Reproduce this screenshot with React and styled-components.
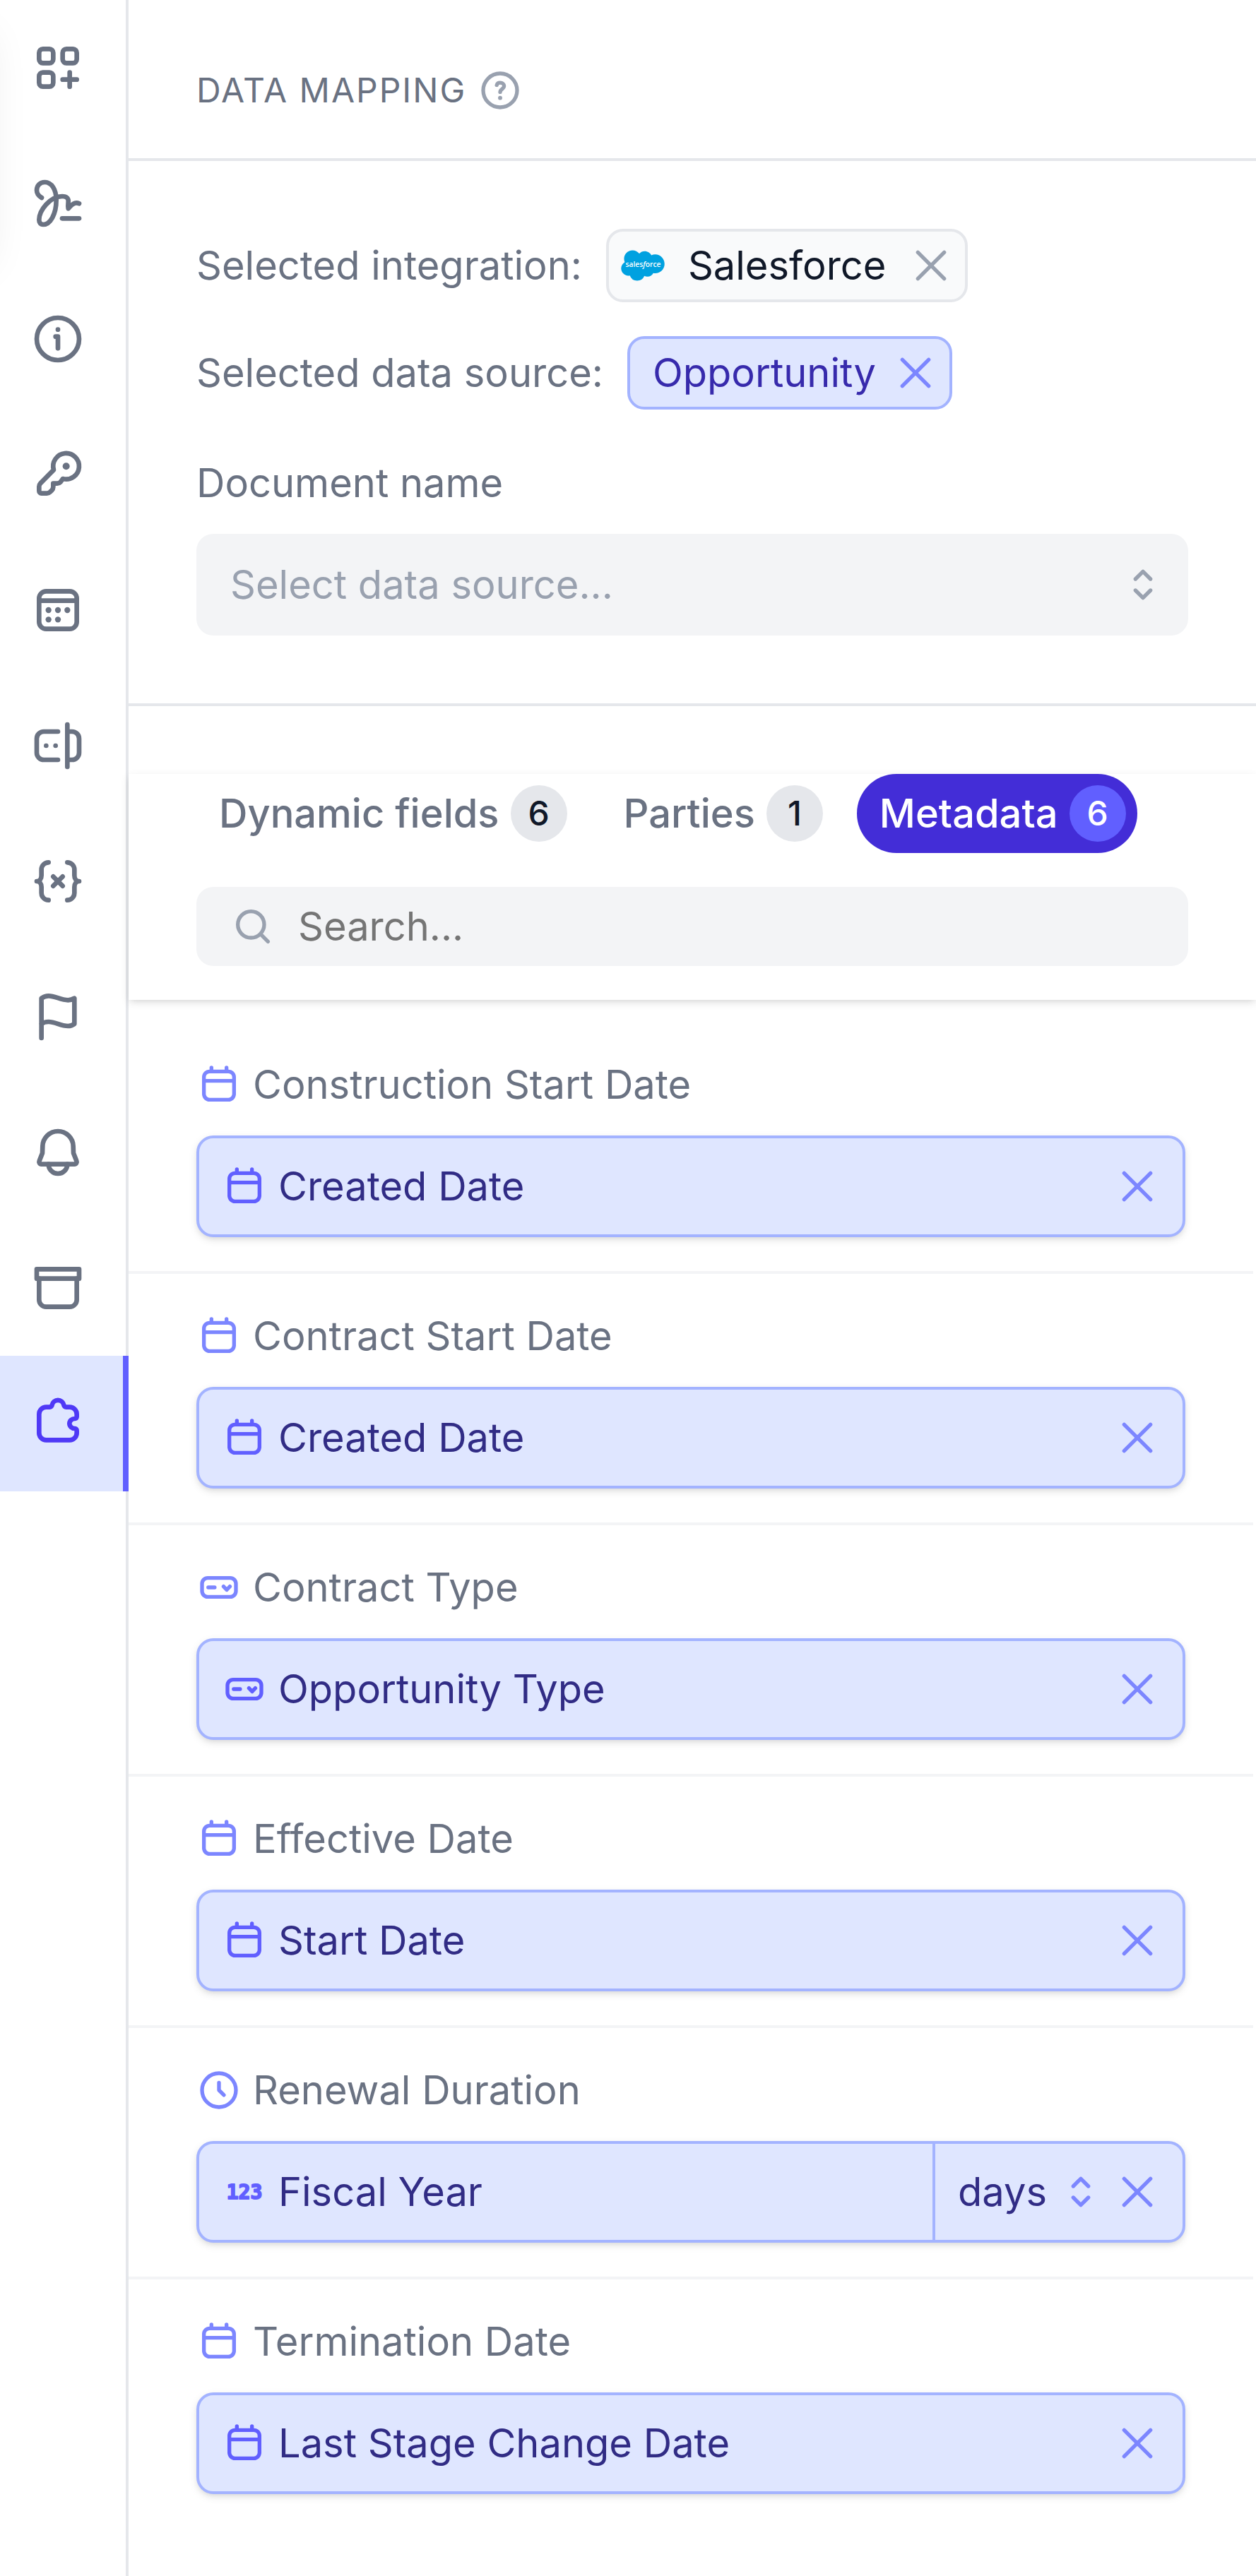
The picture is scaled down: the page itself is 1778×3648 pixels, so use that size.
import React from "react";
import styled, { createGlobalStyle } from "styled-components";

const color = {
  white: "#ffffff",
  gray50: "#f9fafb",
  gray100: "#f3f4f6",
  gray200: "#e5e7eb",
  gray400: "#99a1af",
  gray500: "#6a7282",
  gray900: "#101828",
  indigo100: "#dfe6ff",
  indigo300: "#a3b3ff",
  indigo400: "#7c86ff",
  indigo500: "#615fff",
  indigo600: "#4f39f6",
  indigo700: "#432dd7",
  indigo800: "#372aac",
  indigo900: "#312c85",
};

const softShadow =
  "0 4px 12px rgba(0, 0, 0, 0.1), 0 4px 8px -4px rgba(0, 0, 0, 0.1)";

const GlobalStyle = createGlobalStyle`
  *, *::before, *::after { box-sizing: border-box; }
  body {
    margin: 0;
    background: ${color.white};
    color: ${color.gray500};
    font-family: Inter, "Liberation Sans", sans-serif;
    font-size: 56px;
    line-height: 80px;
  }
  button, input, select {
    margin: 0;
    padding: 0;
    border: 0;
    background: none;
    color: inherit;
    font: inherit;
    letter-spacing: inherit;
  }
  button { cursor: pointer; }
  h1, ul { margin: 0; padding: 0; }
`;

/* ---------- icons ---------- */

const Svg = styled.svg`
  display: block;
  flex: none;
  width: ${(p) => p.$size}px;
  height: ${(p) => p.$size}px;
  fill: none;
  stroke: currentColor;
  stroke-width: 2;
  stroke-linecap: round;
  stroke-linejoin: round;

  .dot {
    fill: currentColor;
    stroke: none;
  }

  .digits {
    fill: currentColor;
    stroke-width: 0.7;
    font-family: "DejaVu Sans Mono", monospace;
    font-size: 10.5px;
    font-weight: 700;
    text-anchor: middle;
  }
`;

const Icon = ({ size = 64, children }) => (
  <Svg $size={size} viewBox="0 0 24 24" aria-hidden="true">
    {children}
  </Svg>
);

const CloseIcon = () => (
  <Icon>
    <path d="M5 5l14 14M19 5L5 19" />
  </Icon>
);

const SelectorIcon = () => (
  <Icon>
    <path d="M8 9l4-4 4 4M16 15l-4 4-4-4" />
  </Icon>
);

const HelpIcon = () => (
  <Icon>
    <circle cx="12" cy="12" r="9" />
    <path d="M10.2 9.2C10.4 8.4 11.1 7.9 12 7.9c1.2 0 2.1.8 2.1 1.8 0 1.5-2.1 1.7-2.1 3.2" />
    <circle className="dot" cx="12" cy="16" r="1.1" />
  </Icon>
);

const SearchIcon = () => (
  <Icon>
    <circle cx="11" cy="11" r="7" />
    <path d="M20 20l-4-4" />
  </Icon>
);

const DateIcon = () => (
  <Icon>
    <rect x="4" y="5" width="16" height="15" rx="3" />
    <path d="M8 3v2M16 3v2M4 10h16" />
  </Icon>
);

const DropdownIcon = () => (
  <Icon>
    <rect x="3" y="7" width="18" height="10" rx="3" />
    <path d="M6.3 12h3.4M14.4 11.5l1.7 1.8 1.7-1.8" />
  </Icon>
);

const ClockIcon = () => (
  <Icon>
    <circle cx="12" cy="12" r="9" />
    <path d="M12 8v4l2.6 2.6" />
  </Icon>
);

const NumberIcon = () => (
  <Icon>
    <text className="digits" x="12" y="15.8">
      123
    </text>
  </Icon>
);

const SalesforceLogo = () => (
  <svg width="64" height="64" viewBox="-0.5 -0.5 25 25" role="img" aria-label="Salesforce logo">
    <path
      fill="#00a1e0"
      d="M10.006 5.415a4.195 4.195 0 0 1 3.045-1.306c1.56 0 2.954.9 3.69 2.205.63-.3 1.35-.45 2.1-.45 2.85 0 5.159 2.34 5.159 5.22s-2.31 5.22-5.176 5.22c-.345 0-.69-.044-1.02-.104a3.75 3.75 0 0 1-3.3 1.95c-.6 0-1.155-.15-1.65-.375A4.314 4.314 0 0 1 8.88 20.4a4.302 4.302 0 0 1-4.05-2.82c-.27.062-.54.076-.825.076-2.204 0-4.005-1.8-4.005-4.05 0-1.5.811-2.805 2.01-3.51-.255-.57-.39-1.2-.39-1.846 0-2.58 2.1-4.65 4.65-4.65 1.53 0 2.85.705 3.72 1.8"
    />
    <text
      x="12.2"
      y="12.9"
      textAnchor="middle"
      fill="#ffffff"
      fontFamily='"Open Sans", sans-serif'
      fontSize="4"
      fontWeight="600"
    >
      sales<tspan fontStyle="italic">f</tspan>orce
    </text>
  </svg>
);

const navIcons = {
  fields: (
    <>
      <rect x="4" y="4" width="6" height="6" rx="1.6" />
      <rect x="14" y="4" width="6" height="6" rx="1.6" />
      <rect x="4" y="14" width="6" height="6" rx="1.6" />
      <path d="M17 14v6M14 17h6" />
    </>
  ),
  signature: (
    <>
      <path d="M5.1 9.6C3.7 8.8 3 7.7 3 6.4 3 4.4 4.5 3 6.4 3c2.9 0 4.9 3.1 4.9 7.6C11.3 16.5 8.8 21 5.7 21 4.6 21 4 20.2 4 19c0-3.900 4.600-10 9.800-10 2 0 2.800 1 2.600 2.500-.1 1-.2 1.800 0 2.700 1.300-1.500 2.700-3 4.600-2.100" />
      <path d="M13.8 18.400H21" />
    </>
  ),
  info: (
    <>
      <circle cx="12" cy="12" r="9" />
      <path d="M11 11h1v5" />
      <circle className="dot" cx="12" cy="8" r="1" />
    </>
  ),
  key: (
    <>
      <path d="M14.1 13.8A5.5 5.5 0 1 0 10.2 10L4.6 15.7A2 2 0 0 0 4 17.1V19a1 1 0 0 0 1 1h2.300a2 2 0 0 0 1.400-.6l.7-.7a2 2 0 0 0 .6-1.400V15.800h1.700a2 2 0 0 0 1.400-.6z" />
      <circle className="dot" cx="15.5" cy="8.5" r="1.5" />
    </>
  ),
  calendar: (
    <>
      <rect x="4" y="4" width="16" height="16" rx="3" />
      <path d="M4 8h16" />
      <circle className="dot" cx="8" cy="12" r="1.25" />
      <circle className="dot" cx="12" cy="12" r="1.25" />
      <circle className="dot" cx="16" cy="12" r="1.25" />
      <circle className="dot" cx="8" cy="16" r="1.25" />
      <circle className="dot" cx="12" cy="16" r="1.25" />
    </>
  ),
  textInput: (
    <>
      <path d="M12 6H6a3 3 0 0 0-3 3v6a3 3 0 0 0 3 3h6M16 3v18M16 6h2a3 3 0 0 1 3 3v6a3 3 0 0 1-3 3h-2" />
      <circle className="dot" cx="7" cy="12" r="1" />
      <circle className="dot" cx="11" cy="12" r="1" />
    </>
  ),
  variable: (
    <path d="M8 4a3 3 0 0 0-3 3v2.500C5 11 4.200 12 3 12c1.200 0 2 1 2 2.500V17a3 3 0 0 0 3 3M16 4a3 3 0 0 1 3 3v2.500c0 1.500.8 2.500 2 2.500-1.200 0-2 1-2 2.500V17a3 3 0 0 1-3 3M10 10l4 4M14 10l-4 4" />
  ),
  flag: (
    <path d="M5 21V4.100c1-.7 2-1 3-1 3 0 5 1.800 8.300 1.800 1 0 1.900-.3 2.700-.8V15c-.8.6-1.800.9-2.700.9-3.300 0-5.300-1.800-8.300-1.800-1.100 0-2.100.2-3 .9" />
  ),
  bell: (
    <>
      <path d="M12 3a6.5 6.5 0 0 0-6.500 6.300l-.1 3-1.300 3.300A1 1 0 0 0 5 17h14a1 1 0 0 0 .9-1.400l-1.300-3.300-.1-3A6.500 6.500 0 0 0 12 3z" />
      <path d="M8 17a4 4 0 0 0 8 0" />
    </>
  ),
  archive: (
    <>
      <rect x="3" y="4" width="18" height="4" />
      <path d="M4 8v9a3 3 0 0 0 3 3h10a3 3 0 0 0 3-3V8" />
    </>
  ),
  integrations: (
    <path d="M7 5h1.500a1 1 0 0 0 1-.9 2.550 2.550 0 0 1 5 0 1 1 0 0 0 1 .9H17a3 3 0 0 1 3 3v.9a1 1 0 0 1-.8 1 2.300 2.100 0 0 0 0 4.200 1 1 0 0 1 .8 1V16a3 3 0 0 1-3 3H7a3 3 0 0 1-3-3V8a3 3 0 0 1 3-3z" />
  ),
};

/* ---------- layout ---------- */

const Layout = styled.div`
  position: relative;
  display: flex;
  min-height: 100vh;
  overflow: hidden;

  /* Shadow of the document canvas that ends at the left edge */
  &::before {
    content: "";
    position: absolute;
    top: 0;
    left: -208px;
    width: 200px;
    height: 344px;
    box-shadow: 0 40px 60px -12px rgba(0, 0, 0, 0.1),
      0 16px 24px -16px rgba(0, 0, 0, 0.1);
    pointer-events: none;
  }
`;

const Sidebar = styled.nav`
  display: flex;
  flex-direction: column;
  flex: none;
  width: 182px;
  border-right: 4px solid ${color.gray200};
`;

const NavButton = styled.button`
  display: flex;
  align-items: center;
  flex: none;
  height: 192px;
  margin-right: -4px;
  padding-left: 42px;
  border-right: ${(p) => (p.$active ? `8px solid ${color.indigo500}` : "0")};
  background: ${(p) => (p.$active ? color.indigo100 : "transparent")};
  color: ${(p) => (p.$active ? color.indigo600 : color.gray500)};
`;

const Panel = styled.main`
  flex: 1;
  min-width: 0;
`;

const Header = styled.header`
  display: flex;
  align-items: center;
  gap: 16px;
  padding: 96px 96px 64px;
  border-bottom: 4px solid ${color.gray200};
`;

const Title = styled.h1`
  font-size: 48px;
  line-height: 64px;
  font-weight: 400;
  letter-spacing: 2px;
  text-transform: uppercase;
`;

const IconButton = styled.button`
  flex: none;
  color: ${(p) => (p.$tone === "indigo" ? color.indigo400 : color.gray400)};
`;

const Source = styled.section`
  display: flex;
  flex-direction: column;
  gap: 48px;
  padding: 96px;
  border-bottom: 4px solid ${color.gray200};
`;

const SelectedRow = styled.div`
  display: flex;
  align-items: center;
  gap: 34px;
`;

const Chip = styled.span`
  display: flex;
  align-items: center;
  gap: ${(p) => (p.$tone === "indigo" ? 24 : 32)}px;
  height: 104px;
  padding: 0 16px 0 ${(p) => (p.$tone === "indigo" ? 32 : 16)}px;
  border: 4px solid
    ${(p) => (p.$tone === "indigo" ? color.indigo300 : color.gray200)};
  border-radius: 24px;
  background: ${(p) => (p.$tone === "indigo" ? color.indigo100 : color.gray50)};
  color: ${(p) => (p.$tone === "indigo" ? color.indigo800 : color.gray900)};
`;

const Field = styled.div`
  display: flex;
  flex-direction: column;
  gap: 32px;
  padding-top: 16px;
`;

const SelectBox = styled.div`
  display: flex;
  align-items: center;
  height: 144px;
  padding: 0 32px 0 48px;
  border-radius: 24px;
  background: ${color.gray100};
  color: ${color.gray400};
`;

const Select = styled.select`
  flex: ${(p) => (p.$grow ? "1" : "none")};
  min-width: 0;
  height: 80px;
  appearance: none;
`;

const Toolbar = styled.div`
  position: sticky;
  top: 0;
  z-index: 1;
  display: flex;
  flex-direction: column;
  gap: 48px;
  margin-top: 96px;
  padding: 0 96px 48px;
  background: ${color.white};
  box-shadow: ${softShadow};
`;

const Tabs = styled.div`
  display: flex;
  gap: 32px;
`;

const Tab = styled.button`
  display: flex;
  align-items: center;
  gap: 16px;
  height: 112px;
  padding: 0 16px 0 32px;
  border-radius: 56px;
  background: ${(p) => (p.$active ? color.indigo700 : "transparent")};
  color: ${(p) => (p.$active ? color.white : color.gray500)};
  font-weight: 500;
  white-space: nowrap;
`;

const Count = styled.span`
  width: 80px;
  border-radius: 40px;
  background: ${(p) => (p.$active ? color.indigo500 : color.gray200)};
  color: ${(p) => (p.$active ? color.white : color.gray900)};
  font-size: 48px;
  text-align: center;
`;

const SearchBox = styled.label`
  display: flex;
  align-items: center;
  gap: 32px;
  height: 112px;
  padding: 0 48px;
  border-radius: 24px;
  background: ${color.gray100};
  color: ${color.gray400};
`;

const SearchInput = styled.input`
  flex: 1;
  min-width: 0;
  height: 80px;
  color: ${color.gray900};
  outline: none;

  &::placeholder {
    color: #757575;
    opacity: 1;
  }
`;

const List = styled.ul`
  margin-right: 4px;
  padding: 32px 0;
  list-style: none;
`;

const Item = styled.li`
  display: flex;
  flex-direction: column;
  gap: 32px;
  padding: 48px 96px;
  border-bottom: 4px solid ${color.gray100};

  &:last-child {
    border-bottom: 0;
  }
`;

const ItemLabel = styled.div`
  display: flex;
  align-items: center;
  gap: 16px;

  svg {
    color: ${color.indigo400};
  }
`;

const Mapping = styled.div`
  display: flex;
  height: 144px;
  border: 4px solid ${color.indigo300};
  border-radius: 24px;
  background: ${color.indigo100};
  box-shadow: ${softShadow};
  color: ${color.indigo900};
`;

const MappingValue = styled.div`
  display: flex;
  align-items: center;
  flex: 1;
  gap: 16px;
  min-width: 0;
  padding-left: 32px;

  svg {
    color: ${color.indigo500};
  }
`;

const MappingActions = styled.div`
  display: flex;
  align-items: center;
  gap: 16px;
  padding: 0 32px;
  border-left: ${(p) => (p.$divided ? `4px solid ${color.indigo300}` : "0")};

  svg {
    color: ${color.indigo400};
  }
`;

/* ---------- content ---------- */

const navItems = [
  ["fields", "Add fields"],
  ["signature", "Signatures"],
  ["info", "Information"],
  ["key", "Access"],
  ["calendar", "Dates"],
  ["textInput", "Inputs"],
  ["variable", "Variables"],
  ["flag", "Milestones"],
  ["bell", "Notifications"],
  ["archive", "Archive"],
  ["integrations", "Integrations"],
];

const tabs = [
  ["Dynamic fields", 6],
  ["Parties", 1],
  ["Metadata", 6],
];

const mappings = [
  { label: "Construction Start Date", icon: DateIcon, value: "Created Date", valueIcon: DateIcon },
  { label: "Contract Start Date", icon: DateIcon, value: "Created Date", valueIcon: DateIcon },
  { label: "Contract Type", icon: DropdownIcon, value: "Opportunity Type", valueIcon: DropdownIcon },
  { label: "Effective Date", icon: DateIcon, value: "Start Date", valueIcon: DateIcon },
  { label: "Renewal Duration", icon: ClockIcon, value: "Fiscal Year", valueIcon: NumberIcon, unit: "days" },
  { label: "Termination Date", icon: DateIcon, value: "Last Stage Change Date", valueIcon: DateIcon },
];

const MappingItem = ({ label, icon: LabelIcon, value, valueIcon: ValueIcon, unit }) => (
  <Item>
    <ItemLabel>
      <LabelIcon />
      <span>{label}</span>
    </ItemLabel>
    <Mapping>
      <MappingValue>
        <ValueIcon />
        <span>{value}</span>
      </MappingValue>
      <MappingActions $divided={Boolean(unit)}>
        {unit && (
          <>
            <Select aria-label={`${label} unit`} defaultValue={unit}>
              <option value={unit}>{unit}</option>
            </Select>
            <SelectorIcon />
          </>
        )}
        <IconButton type="button" $tone="indigo" aria-label={`Remove ${value}`}>
          <CloseIcon />
        </IconButton>
      </MappingActions>
    </Mapping>
  </Item>
);

export default function App() {
  const [activeTab, setActiveTab] = React.useState("Metadata");

  return (
    <>
      <GlobalStyle />
      <Layout>
        <Sidebar aria-label="Document tools">
          {navItems.map(([key, label]) => (
            <NavButton key={key} type="button" aria-label={label} $active={key === "integrations"}>
              <Icon size={80}>{navIcons[key]}</Icon>
            </NavButton>
          ))}
        </Sidebar>
        <Panel>
          <Header>
            <Title>Data mapping</Title>
            <IconButton type="button" aria-label="Help">
              <HelpIcon />
            </IconButton>
          </Header>
          <Source>
            <SelectedRow>
              <span>Selected integration:</span>
              <Chip>
                <SalesforceLogo />
                <span>Salesforce</span>
                <IconButton type="button" aria-label="Remove Salesforce">
                  <CloseIcon />
                </IconButton>
              </Chip>
            </SelectedRow>
            <SelectedRow>
              <span>Selected data source:</span>
              <Chip $tone="indigo">
                <span>Opportunity</span>
                <IconButton type="button" $tone="indigo" aria-label="Remove Opportunity">
                  <CloseIcon />
                </IconButton>
              </Chip>
            </SelectedRow>
            <Field>
              <label htmlFor="document-name">Document name</label>
              <SelectBox>
                <Select id="document-name" $grow defaultValue="">
                  <option value="">Select data source...</option>
                </Select>
                <SelectorIcon />
              </SelectBox>
            </Field>
          </Source>
          <Toolbar>
            <Tabs role="tablist">
              {tabs.map(([name, count]) => (
                <Tab
                  key={name}
                  type="button"
                  role="tab"
                  aria-selected={name === activeTab}
                  $active={name === activeTab}
                  onClick={() => setActiveTab(name)}
                >
                  <span>{name}</span>
                  <Count $active={name === activeTab}>{count}</Count>
                </Tab>
              ))}
            </Tabs>
            <SearchBox>
              <SearchIcon />
              <SearchInput type="text" placeholder="Search..." aria-label="Search" />
            </SearchBox>
          </Toolbar>
          <List>
            {mappings.map((mapping) => (
              <MappingItem key={mapping.label} {...mapping} />
            ))}
          </List>
        </Panel>
      </Layout>
    </>
  );
}
